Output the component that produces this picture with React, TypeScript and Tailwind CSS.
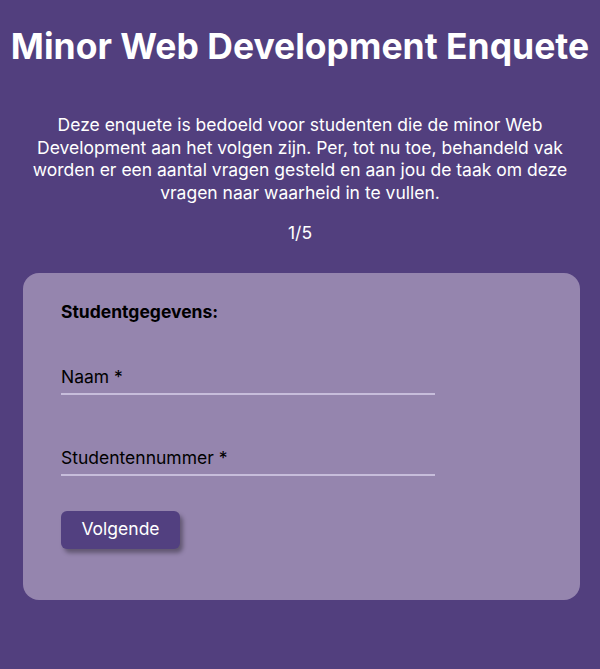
import React, { useState } from 'react';

export default function App() {
  const [naam, setNaam] = useState('');
  const [nummer, setNummer] = useState('');

  return (
    <div className="min-h-[669px] bg-[#523f7e] text-white font-['Inter',sans-serif] pt-[25px] pb-[69px]">
      <h1 className="text-center text-[35.5px] leading-[44px] font-bold whitespace-nowrap">
        Minor Web Development Enquete
      </h1>

      <p className="mt-[45px] px-[23px] text-center text-[17.5px] leading-[22.5px] whitespace-nowrap">
        Deze enquete is bedoeld voor studenten die de minor Web
        <br />
        Development aan het volgen zijn. Per, tot nu toe, behandeld vak
        <br />
        worden er een aantal vragen gesteld en aan jou de taak om deze
        <br />
        vragen naar waarheid in te vullen.
      </p>

      <p className="mt-[18px] text-center text-[17.5px] leading-[22.5px]">1/5</p>

      <form
        className="ml-[23px] mr-[20px] mt-[28px] bg-[#9585ae] rounded-[16px] px-[38px] pt-[28px] pb-[51px] text-black"
        onSubmit={(e) => e.preventDefault()}
      >
        <h2 className="text-[17.5px] leading-[22px] font-bold">Studentgegevens:</h2>

        <label className="block mt-[42px] w-[374px]">
          <input
            type="text"
            value={naam}
            onChange={(e) => setNaam(e.target.value)}
            placeholder="Naam *"
            className="w-full bg-transparent text-[17.5px] leading-[22px] pb-[5px] border-b-2 border-[#c7bddb] outline-none placeholder:text-black"
          />
        </label>

        <label className="block mt-[51px] w-[374px]">
          <input
            type="text"
            value={nummer}
            onChange={(e) => setNummer(e.target.value)}
            placeholder="Studentennummer *"
            className="w-full bg-transparent text-[17.5px] leading-[22px] pb-[5px] border-b-2 border-[#c7bddb] outline-none placeholder:text-black"
          />
        </label>

        <button
          type="submit"
          className="mt-[35px] block w-[119px] h-[38px] rounded-[6px] bg-[#524080] text-white text-[17.5px] shadow-[3px_4px_4px_rgba(0,0,0,0.35)]"
        >
          Volgende
        </button>
      </form>
    </div>
  );
}
